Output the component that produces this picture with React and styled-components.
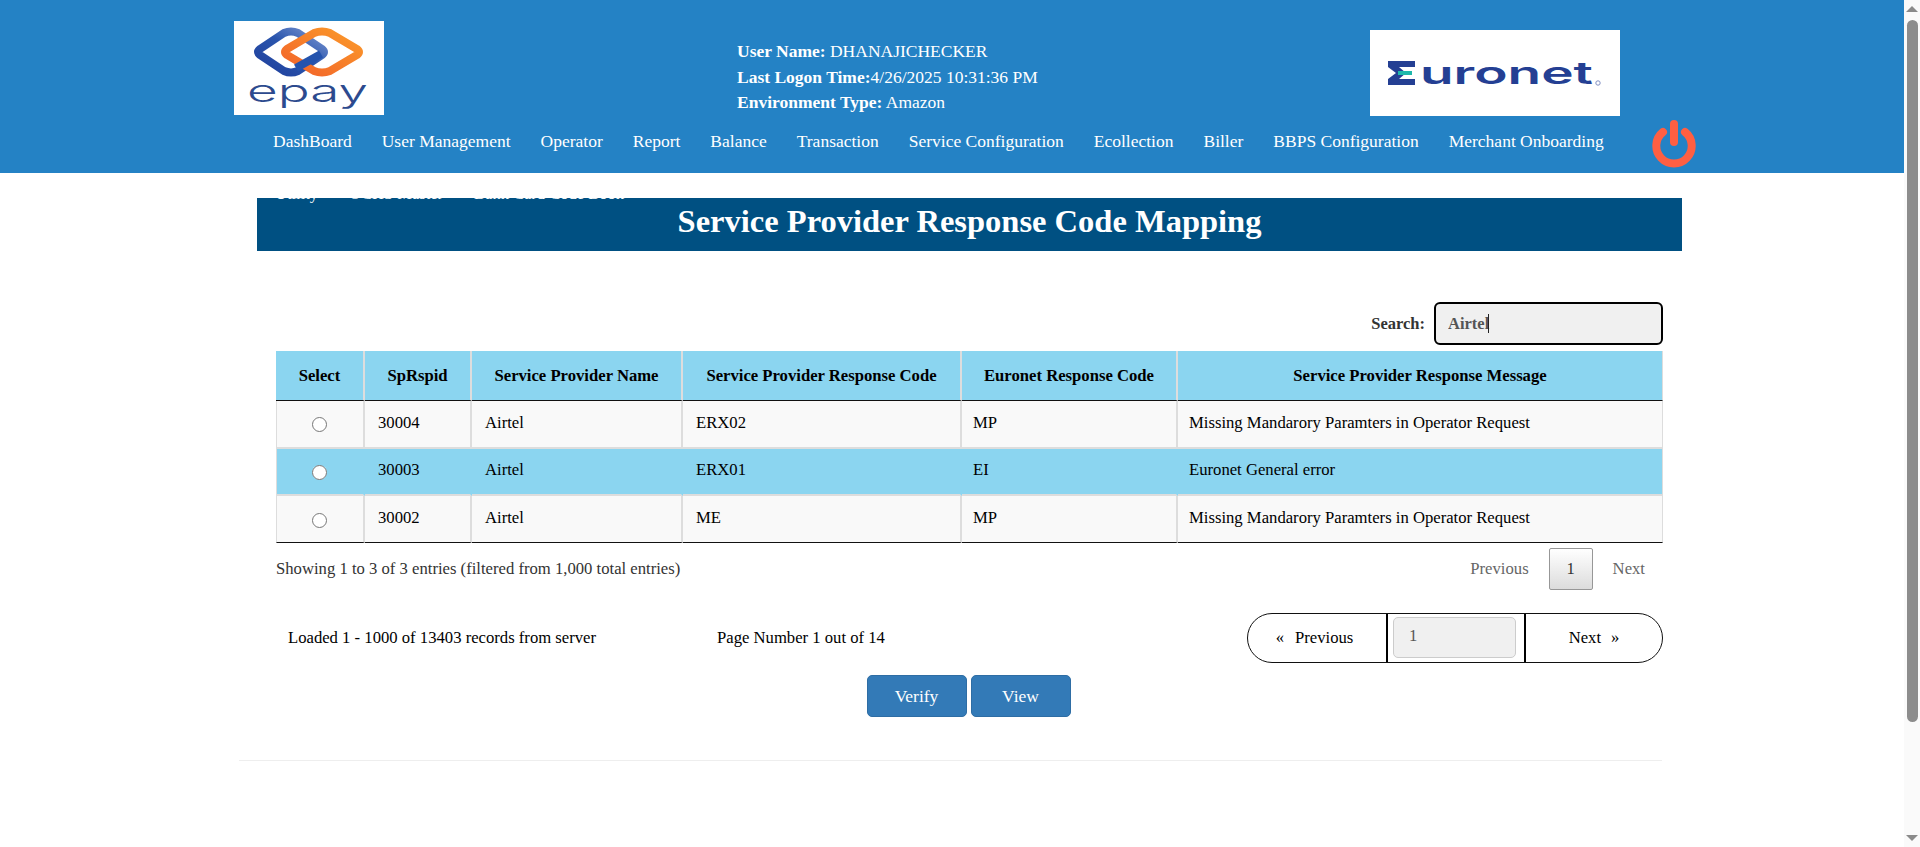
import React from "react";
import styled, { createGlobalStyle } from "styled-components";

const GlobalStyle = createGlobalStyle`
    html, body {
        margin: 0;
        padding: 0;
        height: 100%;
        overflow: hidden;
        background: #fff;
    }
    body {
        font-family: "Liberation Serif", "Times New Roman", serif;
        font-size: 16px;
        color: #000;
    }
`;

const Shell = styled.div`
    display: flex;
    height: 847px;
    overflow: hidden;
`;

const Page = styled.div`
    flex: 1;
    min-width: 0;
`;

/* window scrollbar */
const Scrollbar = styled.div`
    width: 16px;
    display: flex;
    flex-direction: column;
    align-items: center;
    background: #fafafa;
`;

const ScrollArrow = styled.div`
    width: 0;
    height: 0;
    margin: 6px 0;
    border-left: 6px solid transparent;
    border-right: 6px solid transparent;
    ${({ $down }) => ($down ? "border-top: 6px solid #8a8a8a;" : "border-bottom: 6px solid #8a8a8a;")}
`;

const ScrollTrack = styled.div`
    flex: 1;
    width: 100%;
    display: flex;
    justify-content: center;
`;

const ScrollThumb = styled.div`
    width: 11px;
    height: 702px;
    margin-top: 2px;
    border-radius: 6px;
    background: #8c8c8c;
`;

const Header = styled.header`
    background: #2482c5;
    height: 173px;
    box-sizing: border-box;
    padding: 21px 0 0 234px;
    position: relative;
`;

const TopRow = styled.div`
    display: flex;
    align-items: flex-start;
    height: 94px;
`;

const LogoBox = styled.div`
    background: #fff;
    flex: none;
    display: flex;
    align-items: center;
    justify-content: center;
`;

const EpayLogoBox = styled(LogoBox)`
    width: 150px;
    height: 94px;
`;

const EuronetLogoBox = styled(LogoBox)`
    width: 250px;
    height: 86px;
    margin: 9px 0 0 232px;
`;

const UserInfo = styled.div`
    width: 401px;
    margin: 18px 0 0 353px;
    color: #fff;
    font-size: 17.5px;
    line-height: 25.5px;
`;

const Nav = styled.nav`
    display: flex;
    margin: 11px 0 0 24px;
    height: 30px;
    align-items: center;
`;

const NavLink = styled.a`
    color: #fff;
    font-size: 17.5px;
    padding: 0 15px;
    white-space: nowrap;
`;

const PowerButton = styled.svg`
    position: absolute;
    left: 1652px;
    top: 119px;
`;

const Content = styled.main`
    width: 1425px;
    margin: 25px 0 0 257px;
`;

const TitleBar = styled.div`
    position: relative;
    height: 53px;
    background: #005082;
    color: #fff;
    text-align: center;
    font-size: 32.5px;
    font-weight: bold;
    line-height: 47px;
`;

const Crumbs = styled.div`
    position: absolute;
    left: 18px;
    top: -14px;
    display: flex;
    gap: 31px;
    font-size: 16.5px;
    line-height: 20px;
    font-weight: normal;
    color: #fff;
`;

const TableArea = styled.section`
    padding: 0 19px;
`;

const SearchRow = styled.div`
    display: flex;
    justify-content: flex-end;
    align-items: center;
    gap: 9px;
    margin-top: 51px;
    height: 43px;
`;

const SearchLabel = styled.label`
    font-size: 16.5px;
    font-weight: bold;
    color: #333;
`;

const SearchBox = styled.div`
    position: relative;
`;

const SearchInput = styled.input`
    display: block;
    box-sizing: border-box;
    width: 229px;
    height: 43px;
    padding: 0 12px;
    border: 2px solid #000;
    border-radius: 6px;
    background: #f0f0f0;
    color: #555;
    font-family: inherit;
    font-size: 16.5px;
    font-weight: bold;
    outline: none;
`;

/* text cursor sitting after the typed word */
const Caret = styled.span`
    position: absolute;
    left: 54px;
    top: 12px;
    width: 1px;
    height: 19px;
    background: #222;
`;

const Grid = styled.table`
    width: 1387px;
    margin-top: 6px;
    border-collapse: separate;
    border-spacing: 0;
    table-layout: fixed;
    font-size: 16.67px;
`;

const HeadCell = styled.th`
    height: 50px;
    padding: 0;
    background: #8bd5f0;
    border-right: 2px solid #ddd;
    border-bottom: 1px solid #111;
    text-align: center;
    font-weight: bold;
    box-sizing: border-box;

    &:last-child {
        border-right: 1px solid #ddd;
    }
`;

const Cell = styled.td`
    height: 47.5px;
    box-sizing: border-box;
    padding: 0 13px 2px;
    background: ${({ $selected }) => ($selected ? "#8bd5f0" : "#f9f9f9")};
    border-bottom: 2px solid #ddd;
    border-right: 2px solid ${({ $selected }) => ($selected ? "#8bd5f0" : "#ddd")};
    text-align: left;

    &:first-child {
        border-left: 1px solid #ddd;
        padding: 0 2px 0 0;
        text-align: center;
    }
    &:nth-child(n + 5) {
        padding-left: 11px;
    }
    &:last-child {
        border-right: 1px solid #ddd;
    }
    tr:last-child > & {
        height: 47px;
        border-bottom: 1px solid #111;
    }
`;

const Radio = styled.input`
    margin: 0;
    width: 15px;
    height: 15px;
    vertical-align: middle;
`;

const FooterRow = styled.div`
    display: flex;
    justify-content: space-between;
    align-items: center;
    height: 47px;
    margin-top: 2px;
`;

const Info = styled.div`
    font-size: 16.67px;
    color: #333;
`;

const Paging = styled.div`
    display: flex;
    align-items: center;
    margin-right: 18px;
    font-size: 16.67px;
    color: #666;
    gap: 20px;
`;

const PageCurrent = styled.span`
    width: 44px;
    height: 42px;
    box-sizing: border-box;
    display: flex;
    align-items: center;
    justify-content: center;
    color: #333;
    border: 1px solid #979797;
    border-radius: 2px;
    background: linear-gradient(to bottom, #fff, #dcdcdc);
`;

const ServerRow = styled.div`
    display: flex;
    align-items: center;
    height: 50px;
    margin-top: 21px;
    font-size: 16.67px;
`;

const Loaded = styled.div`
    margin-left: 12px;
    width: 429px;
`;

const PageNumber = styled.div`
    flex: 1;
`;

const Pager = styled.div`
    display: flex;
    width: 416px;
    height: 50px;
    box-sizing: border-box;
    border: 1px solid #111;
    border-radius: 25px;
`;

const PagerButton = styled.div`
    box-sizing: border-box;
    ${({ $back }) => ($back ? "flex: none; width: 138px; padding-right: 5px; gap: 11px;" : "flex: 1; gap: 10px;")}
    display: flex;
    align-items: center;
    justify-content: center;
`;

const PagerInputBox = styled.div`
    width: 140px;
    box-sizing: border-box;
    border-left: 2px solid #000;
    border-right: 2px solid #000;
    padding: 3px 8px 3px 5px;
`;

const PagerInput = styled.input`
    box-sizing: border-box;
    width: 100%;
    height: 41px;
    padding: 0 15px 4px;
    border: 1px solid #ccc;
    border-radius: 5px;
    background: #f0f0f0;
    color: #555;
    font-family: inherit;
    font-size: 16.67px;
`;

const Actions = styled.div`
    display: flex;
    justify-content: center;
    gap: 4px;
    margin-top: 12px;
    padding-right: 2px;
`;

const ActionButton = styled.button`
    width: 100px;
    height: 42px;
    border: 1px solid #2e6da4;
    border-radius: 5px;
    background: #337ab7;
    color: #fff;
    font-family: inherit;
    font-size: 17.5px;
`;

const Rule = styled.hr`
    margin: 43px 0 0 239px;
    width: 1423px;
    border: 0;
    border-top: 1px solid #eee;
`;

const navItems = [
    "DashBoard",
    "User Management",
    "Operator",
    "Report",
    "Balance",
    "Transaction",
    "Service Configuration",
    "Ecollection",
    "Biller",
    "BBPS Configuration",
    "Merchant Onboarding",
];

const columns = [
    { title: "Select", width: 89 },
    { title: "SpRspid", width: 107 },
    { title: "Service Provider Name", width: 211 },
    { title: "Service Provider Response Code", width: 279 },
    { title: "Euronet Response Code", width: 216 },
    { title: "Service Provider Response Message", width: 485 },
];

const rows = [
    { id: "30004", name: "Airtel", code: "ERX02", euronet: "MP", message: "Missing Mandarory Paramters in Operator Request" },
    { id: "30003", name: "Airtel", code: "ERX01", euronet: "EI", message: "Euronet General error", selected: true },
    { id: "30002", name: "Airtel", code: "ME", euronet: "MP", message: "Missing Mandarory Paramters in Operator Request" },
];

const EpayLogo = () => (
    <svg width="150" height="94" viewBox="0 0 150 94">
        <defs>
            <linearGradient id="epayBlue" x1="0" y1="1" x2="1" y2="0">
                <stop offset="0" stopColor="#1f3f9c" />
                <stop offset="0.55" stopColor="#2a55ad" />
                <stop offset="1" stopColor="#7c97d2" />
            </linearGradient>
            <linearGradient id="epayOrange" x1="0" y1="1" x2="1" y2="0">
                <stop offset="0" stopColor="#f2622a" />
                <stop offset="1" stopColor="#fb9a2a" />
            </linearGradient>
        </defs>
        <path d="M26 28 L50 12 Q57 9 64 12 L88 28 Q92 31 88 34 L64 50 Q57 53 50 50 L26 34 Q22 31 26 28 Z" fill="none" stroke="url(#epayBlue)" strokeWidth="8" />
        <path d="M53 28 L80 12 Q88 9 96 12 L123 28 Q127 31 123 34 L96 50 Q88 53 80 50 L53 34 Q49 31 53 28 Z" fill="none" stroke="url(#epayOrange)" strokeWidth="8" />
        <path d="M62 47 L87 33" fill="none" stroke="#2453ad" strokeWidth="8" />
        <text x="13" y="81" fontFamily="Inter, sans-serif" fontSize="31" fontWeight="300" fill="#2c4a8e" textLength="121" lengthAdjust="spacingAndGlyphs">epay</text>
    </svg>
);

const EuronetLogo = () => (
    <svg width="250" height="86" viewBox="0 0 250 86">
        <path d="M18 31 H45 V37 H29 L36 43 L29 49 H45 V55 H18 V49 L26 43 L18 37 Z" fill="#243f93" />
        <rect x="28" y="41" width="14" height="4" fill="#1eb8ab" />
        <text x="50" y="54" fontFamily="Inter, sans-serif" fontSize="31" fontWeight="600" fill="#243f93" textLength="173" lengthAdjust="spacingAndGlyphs">uronet</text>
        <circle cx="228" cy="53" r="2.2" fill="none" stroke="#7f8fc2" strokeWidth="1" />
    </svg>
);

const App = () => (
    <>
        <GlobalStyle />
        <Shell>
            <Page>
                <Header>
                    <TopRow>
                        <EpayLogoBox><EpayLogo /></EpayLogoBox>
                        <UserInfo>
                            <div><b>User Name:</b> DHANAJICHECKER</div>
                            <div><b>Last Logon Time:</b>4/26/2025 10:31:36 PM</div>
                            <div><b>Environment Type:</b> Amazon</div>
                        </UserInfo>
                        <EuronetLogoBox><EuronetLogo /></EuronetLogoBox>
                    </TopRow>
                    <Nav>
                        {navItems.map((item) => (
                            <NavLink key={item}>{item}</NavLink>
                        ))}
                    </Nav>
                    <PowerButton width="44" height="50" viewBox="0 0 44 50">
                        <path d="M11 13 A17.7 17.7 0 1 0 33 13" fill="none" stroke="#ff5f42" strokeWidth="8" strokeLinecap="round" />
                        <path d="M22 5 V23" fill="none" stroke="#ff5f42" strokeWidth="8" strokeLinecap="round" />
                    </PowerButton>
                </Header>
                <Content>
                    <TitleBar>
                        <Crumbs>
                            <span>Utility</span>
                            <span>OCHS Master</span>
                            <span>Bank Card Code Book</span>
                        </Crumbs>
                        Service Provider Response Code Mapping
                    </TitleBar>
                    <TableArea>
                        <SearchRow>
                            <SearchLabel>Search:</SearchLabel>
                            <SearchBox>
                                <SearchInput defaultValue="Airtel" />
                                <Caret />
                            </SearchBox>
                        </SearchRow>
                        <Grid>
                            <colgroup>
                                {columns.map((col) => (
                                    <col key={col.title} width={col.width} />
                                ))}
                            </colgroup>
                            <thead>
                                <tr>
                                    {columns.map((col) => (
                                        <HeadCell key={col.title}>{col.title}</HeadCell>
                                    ))}
                                </tr>
                            </thead>
                            <tbody>
                                {rows.map((row) => (
                                    <tr key={row.id}>
                                        <Cell $selected={row.selected}><Radio type="radio" name="row" /></Cell>
                                        <Cell $selected={row.selected}>{row.id}</Cell>
                                        <Cell $selected={row.selected}>{row.name}</Cell>
                                        <Cell $selected={row.selected}>{row.code}</Cell>
                                        <Cell $selected={row.selected}>{row.euronet}</Cell>
                                        <Cell $selected={row.selected}>{row.message}</Cell>
                                    </tr>
                                ))}
                            </tbody>
                        </Grid>
                        <FooterRow>
                            <Info>Showing 1 to 3 of 3 entries (filtered from 1,000 total entries)</Info>
                            <Paging>
                                <span>Previous</span>
                                <PageCurrent>1</PageCurrent>
                                <span>Next</span>
                            </Paging>
                        </FooterRow>
                        <ServerRow>
                            <Loaded>Loaded 1 - 1000 of 13403 records from server</Loaded>
                            <PageNumber>Page Number 1 out of 14</PageNumber>
                            <Pager>
                                <PagerButton $back><span>«</span><span>Previous</span></PagerButton>
                                <PagerInputBox><PagerInput defaultValue="1" /></PagerInputBox>
                                <PagerButton><span>Next</span><span>»</span></PagerButton>
                            </Pager>
                        </ServerRow>
                        <Actions>
                            <ActionButton>Verify</ActionButton>
                            <ActionButton>View</ActionButton>
                        </Actions>
                    </TableArea>
                </Content>
                <Rule />
            </Page>
            <Scrollbar>
                <ScrollArrow />
                <ScrollTrack><ScrollThumb /></ScrollTrack>
                <ScrollArrow $down />
            </Scrollbar>
        </Shell>
    </>
);

export default App;
